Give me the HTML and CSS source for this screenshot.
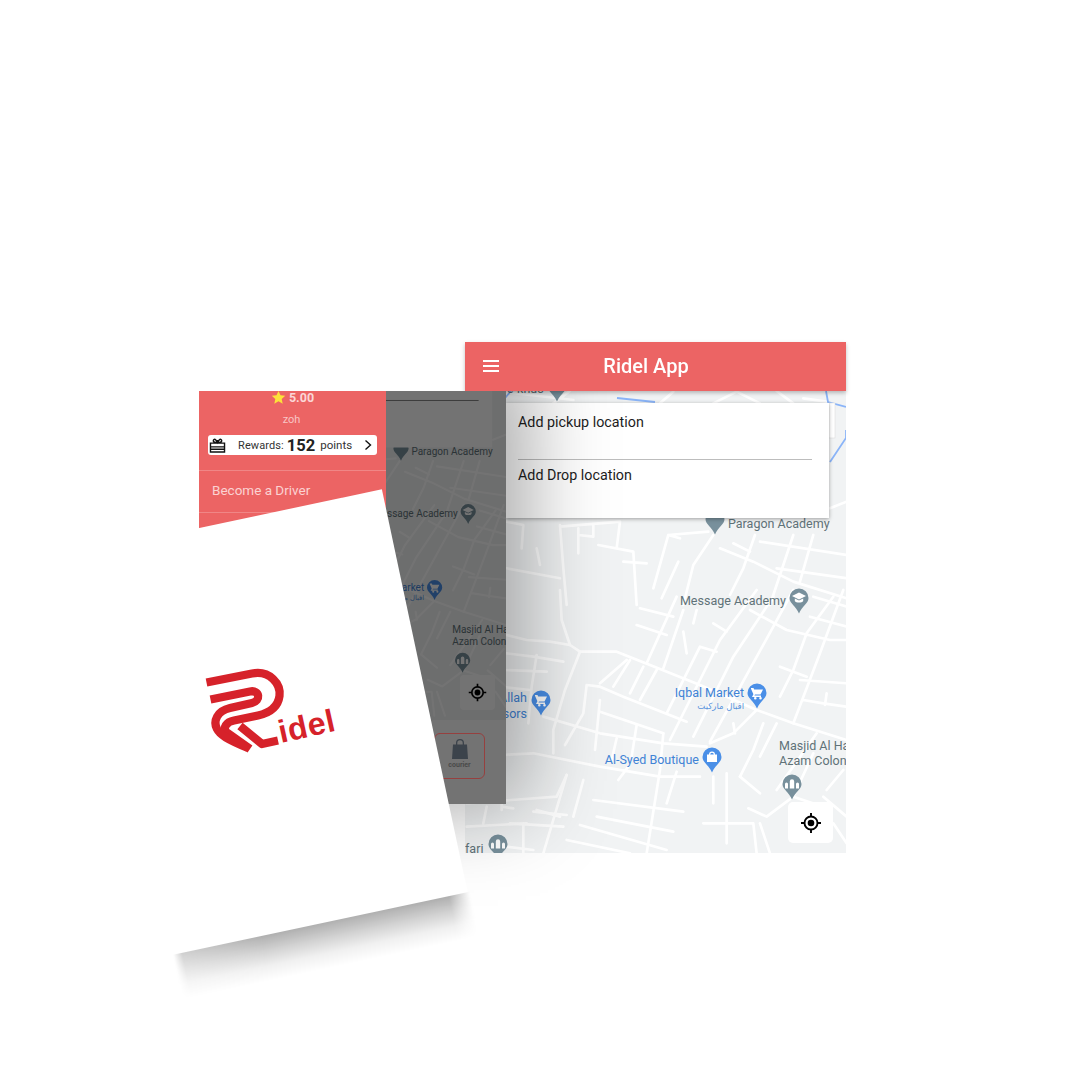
FILE: index.html
```html
<!DOCTYPE html>
<html lang="en">
<head>
<meta charset="utf-8">
<title>Ridel App</title>
<link rel="stylesheet" href="styles.css">
</head>
<body>
<svg class="defs" width="0" height="0" aria-hidden="true">
  <defs>
    <g id="roads" fill="none" stroke="#fff" stroke-linejoin="round" stroke-linecap="round">
      <g transform="translate(500 590) scale(.3333)" stroke-width="8">
        <path d="M-120 125L0 130L80 150L150 155L210 165L240 185L350 185L450 225L600 285L770 360L880 400L1040 450"/>
        <path d="M180 0L185 90L210 165M240 185L195 300L160 420L160 490M20 190L100 200L190 215M10 240L140 245M0 290L90 300M110 195L95 290L85 400"/>
        <path d="M130 380L300 430L490 460L620 470M260 285L300 290L370 320L560 395M260 285L250 370L195 465M300 365L490 430M300 330L285 480"/>
        <path d="M490 430L480 540L440 790M630 460L700 430L770 360M410 405L395 500M350 445L335 510"/>
        <path d="M510 450L660 150L770 0M630 455L820 110L880 0M580 440L700 200L820 20M300 280L380 210M340 290L390 210M390 310L430 230M420 330L470 240M440 220L530 20M490 235L550 60M500 370L600 170L650 185"/>
        <path d="M880 400L960 190L1030 0M840 320L880 240L920 130L1000 20M900 270L1040 280M910 330L970 340L1040 350M980 310L975 345M420 55L520 80M410 105L500 135M580 100L590 60M550 125L560 190M640 100L680 125M930 80L1040 110M940 20L1040 50M750 60L860 120L990 150L1040 150M840 230L920 260"/>
        <path d="M720 560L760 480L790 400M640 560L640 640M680 550L680 760M700 400L705 430M780 500L830 400"/>
        <path d="M0 495L100 490L300 530L480 560L600 560M200 555L130 790M250 570L220 680M280 630L550 665M290 680L520 725M240 705L500 780M200 750L390 790M500 640L530 545M355 570L385 530"/>
        <path d="M610 700L760 700L770 790M745 655L800 680L880 620L970 650M780 700L810 790M970 620L1040 680M980 600L1030 540M720 560L780 610M830 600L950 430M940 490L880 620M1000 700L1040 760"/>
        <path d="M-100 640L170 620L200 555M100 665L200 675M30 700L190 710M20 770L100 780"/>
      </g>
      <g transform="translate(460 335) scale(.3333)" stroke-width="8">
        <path d="M140 172L340 195M330 168L280 205M600 205L640 170M760 205L830 170L900 205M950 168L1000 205M1030 190L1100 200"/>
        <path d="M140 560L190 570L185 640M230 640L240 690M300 575L480 560L470 640M300 570L310 700L320 810M355 580L355 655M355 600L400 605L400 570M415 630L520 650L530 810M490 680L560 685"/>
        <path d="M580 760L625 600L745 590M605 790L655 680M625 600L660 610M760 600L700 690L670 810M780 640L880 680L1000 740L1160 790M820 625L870 650M885 600L850 700L810 780M900 620L1160 660M950 700L1160 730M1000 600L960 720L930 810M1060 600L1020 740M1110 520L1160 500"/>
        <path d="M140 700L300 730"/>
      </g>
      <g transform="translate(380 590) scale(.3333)" stroke-width="8">
        <path d="M260 710L440 700M430 700L430 790M320 650L310 700M365 650L400 655M365 630L365 660M470 660L540 680"/>
      </g>
    </g>
    <path id="pin" d="M0-9.500a9.500 9.500 0 0 1 9.500 9.500c0 5.500-6.500 8-9.500 15.500c-3-7.500-9.500-10-9.500-15.500a9.500 9.500 0 0 1 9.500-9.500z"/>
    <g id="pin-edu"><use href="#pin"/><path fill="#fff" d="M0-5.500L7-2L0 1.500L-7-2z"/><path fill="#fff" d="M-4.200 0.500V3C-3 5 3 5 4.200 3V0.500L0 2.500z"/></g>
    <g id="pin-cart"><use href="#pin"/><path fill="#fff" d="M-6-5h2.500l.700 1.500h8.800l-2.500 5h-5.500l-.600 1h6.600v1.500h-9l1.400-2.800l-2.300-5.200h-.100zM-3 5.200a1.300 1.300 0 1 0 2.600 0a1.300 1.300 0 1 0-2.600 0zM2.200 5.200a1.300 1.300 0 1 0 2.600 0a1.300 1.300 0 1 0-2.600 0z"/></g>
    <g id="pin-bag"><use href="#pin"/><path fill="#fff" d="M-5-2.500h2a3 3 0 0 1 6 0h2v7.500h-10zM-1.800-2.500h3.600a1.800 1.800 0 0 0-3.600 0z"/></g>
    <g id="pin-mosque"><use href="#pin"/><path fill="#fff" d="M-7 4.500V0a1.500 1.500 0 0 1 3 0V4.500zM-2.200 4.500V-2.500a2.200 2.200 0 0 1 4.400 0V4.500zM4 4.500V0a1.500 1.500 0 0 1 3 0V4.500z"/></g>
    <g id="gps" fill="none" stroke="#000" stroke-width="1.900">
      <circle cx="0" cy="0" r="6.500"/><circle cx="0" cy="0" r="3.300" fill="#000" stroke="none"/>
      <path d="M0-10V-6.500M0 6.500V10M-10 0H-6.500M6.500 0H10"/>
    </g>
  </defs>
</svg>

<main class="canvas">
  <section class="screen screen-main">
    <header class="appbar">
      <span class="burger"><i></i><i></i><i></i></span>
      <h1 class="appbar-title">Ridel App</h1>
    </header>
    <div class="map">
      <svg class="map-art" viewBox="465 391 381 462">
        <use href="#roads"/>
        <g class="river" fill="none" stroke="#8ab4f8" stroke-width="1.800">
          <path d="M500 404L511 391M617 398L655 402M826 391L828 402L846 407M830 462L846 438M846 438V430"/>
        </g>
        <rect x="829" y="403" width="6" height="35" fill="#fff" stroke="#dcdcdc" stroke-width=".6"/>
        <text class="lbl" x="507" y="393">e-khus</text>
        <use href="#pin" class="pin-grey" transform="translate(557 386)"/>
        <use href="#pin" class="pin-grey" transform="translate(715 519)"/>
        <text class="lbl" x="728" y="528">Paragon Academy</text>
        <text class="lbl" x="786" y="605" text-anchor="end">Message Academy</text>
        <use href="#pin-edu" class="pin-grey" transform="translate(799 598)"/>
        <text class="lbl-blue" x="744" y="697" text-anchor="end">Iqbal Market</text>
        <text class="lbl-ar" x="744" y="709" text-anchor="end">اقبال مارکیت</text>
        <use href="#pin-cart" class="pin-blue" transform="translate(757 693)"/>
        <text class="lbl-blue" x="527" y="702" text-anchor="end">Allah</text>
        <text class="lbl-blue" x="527" y="718" text-anchor="end">Ghassors</text>
        <use href="#pin-cart" class="pin-blue" transform="translate(541 700)"/>
        <text class="lbl-blue" x="699" y="764" text-anchor="end">Al-Syed Boutique</text>
        <use href="#pin-bag" class="pin-blue" transform="translate(712 757)"/>
        <text class="lbl" x="779" y="750">Masjid Al Haji</text>
        <text class="lbl" x="779" y="765">Azam Colony</text>
        <use href="#pin-mosque" class="pin-grey" transform="translate(792 784)"/>
        <text class="lbl" x="465" y="853">fari</text>
        <use href="#pin-mosque" class="pin-grey" transform="translate(498 844)"/>
      </svg>
      <div class="trip-card">
        <div class="trip-row trip-row-line">Add pickup location</div>
        <div class="trip-row trip-row-last">Add Drop location</div>
      </div>
      <span class="locate locate-main">
        <svg viewBox="-12 -12 24 24" width="24" height="24"><use href="#gps"/></svg>
      </span>
    </div>
  </section>

  <section class="screen screen-menu">
    <aside class="drawer">
      <div class="rating">
        <svg viewBox="0 0 24 24" width="15" height="15"><path fill="#fde23a" d="M12 1.500l3.200 7 7.600.8-5.700 5.100 1.600 7.500L12 18.100l-6.700 3.800 1.600-7.500L1.200 9.300l7.600-.8z"/></svg>
        <span>5.00</span>
      </div>
      <div class="user">zoh</div>
      <div class="rewards">
        <svg class="gift" viewBox="0 0 18 16" width="17" height="15"><path fill="none" stroke="#111" stroke-width="1.500" d="M1.500 5.500h15v9.500h-15zM1.500 9.500h15M1.500 12h15M9 5V2M9 5C6 5 3.500 4 5 1.800C6.500.5 8 3 9 5C10 3 11.500.5 13 1.800C14.500 4 12 5 9 5z"/></svg>
        <span class="rewards-label">Rewards:</span>
        <b class="rewards-num">152</b>
        <span class="rewards-unit">points</span>
        <svg class="chev" viewBox="0 0 8 12" width="8" height="12"><path fill="none" stroke="#111" stroke-width="1.400" d="M1.500 1.500L6.500 6L1.500 10.500"/></svg>
      </div>
      <div class="menu-item">Become a Driver</div>
      <div class="menu-item"></div>
    </aside>
    <div class="peek">
      <div class="peek-mapwrap">
        <svg class="map-art" viewBox="696.250 447.500 150 411">
          <use href="#roads"/>
          <use href="#pin" class="pin-grey" transform="translate(715 519)"/>
          <rect x="696" y="447" width="133" height="71" fill="#fff"/>
          <rect x="696" y="458.600" width="116" height="1" fill="#666"/>
          <text class="lbl" x="728" y="528">Paragon Academy</text>
          <text class="lbl" x="786" y="605" text-anchor="end">Message Academy</text>
          <use href="#pin-edu" class="pin-grey" transform="translate(799 598)"/>
          <text class="lbl-blue" x="744" y="697" text-anchor="end">Iqbal Market</text>
          <text class="lbl-ar" x="744" y="709" text-anchor="end">اقبال مارکیت</text>
          <use href="#pin-cart" class="pin-blue" transform="translate(757 693)"/>
          <text class="lbl" x="779" y="750">Masjid Al Haji</text>
          <text class="lbl" x="779" y="765">Azam Colony</text>
          <use href="#pin-mosque" class="pin-grey" transform="translate(792 784)"/>
        </svg>
        <span class="locate locate-peek"></span>
      </div>
      <div class="peek-bar">
        <div class="courier">
          <svg viewBox="0 0 16 20" width="16" height="20"><path fill="#3c434b" d="M1 5.500h3V4a4 4 0 0 1 8 0v1.500h3L16 20H0zM5.300 5.500h5.400V4a2.700 2.700 0 0 0-5.400 0z"/></svg>
          <span>courier</span>
        </div>
      </div>
      <div class="dim"></div>
      <svg class="gps-top" viewBox="-12 -12 24 24" width="21" height="21"><use href="#gps"/></svg>
    </div>
  </section>

  <section class="splash"></section>
  <svg class="logo" viewBox="0 0 160 120" width="160" height="120">
    <g fill="none" stroke="#d6222a" stroke-width="8.300" stroke-linejoin="round">
      <path d="M16.500 32.500L62 23.500C80 20 91 34 89.500 46C88 57 79 63 68 65.500L44 70.500C36 72 33 78 36 82L60 99"/>
      <path d="M20.500 49.500L60 41.500C70 39.500 71 51 62 53L40 58C27 61 23 71 27 79C30 85 37 89 58 98"/>
      <path d="M50 76L72 94L88 90.500"/>
    </g>
    <text class="logo-word" transform="translate(91 93) rotate(-12.500)">idel</text>
  </svg>
</main>
</body>
</html>
```
FILE: styles.css
```css
* { box-sizing: border-box; }
html, body { margin: 0; padding: 0; background: #fff; }
body { width: 1080px; height: 1080px; overflow: hidden; font-family: Roboto, "Liberation Sans", sans-serif; }
.defs { position: absolute; }
.canvas { position: relative; width: 1080px; height: 1080px; filter: blur(.45px); }

.screen { position: absolute; }
.screen-main {
  left: 465px; top: 342px; width: 381px; height: 511px;
  display: flex; flex-direction: column; z-index: 1;
}
.appbar {
  position: relative; z-index: 2; height: 49px; flex: none;
  background: #ec6464; color: #fff;
  display: flex; align-items: center; justify-content: center;
  box-shadow: 0 2px 4px rgba(0,0,0,.25);
}
.burger { position: absolute; left: 18px; top: 18px; display: flex; flex-direction: column; gap: 3px; }
.burger i { display: block; width: 16px; height: 2px; background: #fff; }
.appbar-title { margin: 0 19px 2px 0; font-size: 20px; font-weight: 500; }

.map { position: relative; flex: 1; background: #f1f3f4; overflow: hidden; }
.map-art { display: block; width: 100%; height: 100%; }
.lbl, .lbl-blue { font-family: Roboto, sans-serif; font-size: 12.500px; }
.lbl { fill: #5f7278; }
.lbl-blue { fill: #3f83d6; }
.lbl-ar { font-family: "DejaVu Sans", sans-serif; font-size: 8.500px; fill: #5a94dd; }
.pin-grey { fill: #78909c; }
.pin-blue { fill: #4a8fe7; }

.trip-card {
  position: absolute; left: 41px; top: 12px; width: 323px; height: 115px;
  background: #fff; box-shadow: 0 1px 4px rgba(0,0,0,.35);
  padding: 0 17px 0 12px;
}
.trip-row { font-size: 14.300px; line-height: 19px; color: #1d1d1d; }
.trip-row-line { height: 57px; padding-top: 10px; border-bottom: 1px solid #bdbdbd; }
.trip-row-last { padding-top: 6px; }
.locate { position: absolute; display: flex; align-items: center; justify-content: center; background: #fff; border-radius: 5px; }
.locate-main { left: 323px; top: 411px; width: 45px; height: 41px; }

.screen-menu {
  left: 199px; top: 391px; width: 307px; height: 413px;
  display: flex; z-index: 2;
  box-shadow: 0 -15px 80px 20px rgba(0,0,0,.35);
  clip-path: inset(0 -120px -120px 0);
}
.drawer { width: 187px; flex: none; background: #ec6464; color: #fbd6d6; overflow: hidden; }
.rating { height: 14px; display: flex; align-items: center; justify-content: center; gap: 3px; font-size: 12.500px; font-weight: 700; margin-bottom: 8px; margin-top: -1px; }
.user { height: 17px; font-size: 11px; line-height: 15px; text-align: center; margin-right: 2px; color: #f9c4c4; }
.rewards {
  margin: 6px 9px 15px; height: 20px; background: #fff; border-radius: 3px; color: #333;
  display: flex; align-items: center; padding: 0 5px 0 1px;
  font-size: 11px;
}
.gift { flex: none; margin-right: 12px; }
.rewards-label { letter-spacing: .1px; }
.rewards-num { font-size: 16.500px; margin: 0 5px 0 3px; color: #222; }
.rewards-unit { font-size: 11.500px; }
.chev { margin-left: auto; }
.menu-item { height: 42px; border-top: 1px solid rgba(255,255,255,.22); padding: 10px 0 0 13px; font-size: 13.500px; line-height: 18px; color: #fbd2d2; }

.peek { position: relative; flex: 1; display: flex; flex-direction: column; background: #fff; overflow: hidden; }
.peek-mapwrap { position: relative; height: 329px; background: #f1f3f4; }
.peek-mapwrap .map-art { position: absolute; inset: 0; }
.locate-peek { left: 74px; top: 284px; width: 35px; height: 35px; border-radius: 4px; }
.peek-bar { flex: 1; background: #fff; padding: 13px 21px 0 48px; }
.courier {
  position: relative; z-index: 2;
  height: 46px; border: 1px solid #96403f; border-radius: 6px;
  display: flex; flex-direction: column; align-items: center; padding-top: 5px; gap: 2px;
  font-size: 7px; font-weight: 700; color: #4a4a4a; line-height: 9px;
}
.dim { position: absolute; inset: 0; background: rgba(0,0,0,.55); }
.gps-top { position: absolute; left: 81px; top: 291px; }

.splash {
  position: absolute; left: 126.500px; top: 515.500px; width: 301px; height: 412px;
  background: #fff; transform: rotate(-12deg); z-index: 3;
}
.splash::after {
  content: ""; position: absolute; left: 0; right: -2px; top: 100%; height: 46px;
  background: linear-gradient(rgba(0,0,0,.31), rgba(0,0,0,.18) 33%, rgba(0,0,0,.06) 66%, rgba(0,0,0,0));
  -webkit-mask-image: linear-gradient(to right, rgba(0,0,0,0), rgba(0,0,0,.6) 3%, #000 30%, #000 93%, rgba(0,0,0,0));
  mask-image: linear-gradient(to right, rgba(0,0,0,0), rgba(0,0,0,.6) 3%, #000 30%, #000 93%, rgba(0,0,0,0));
}
.logo { position: absolute; left: 190px; top: 650px; z-index: 4; }
.logo-word { font-family: "Liberation Sans", sans-serif; font-weight: 700; font-size: 32px; fill: #d6222a; letter-spacing: .6px; }
```
